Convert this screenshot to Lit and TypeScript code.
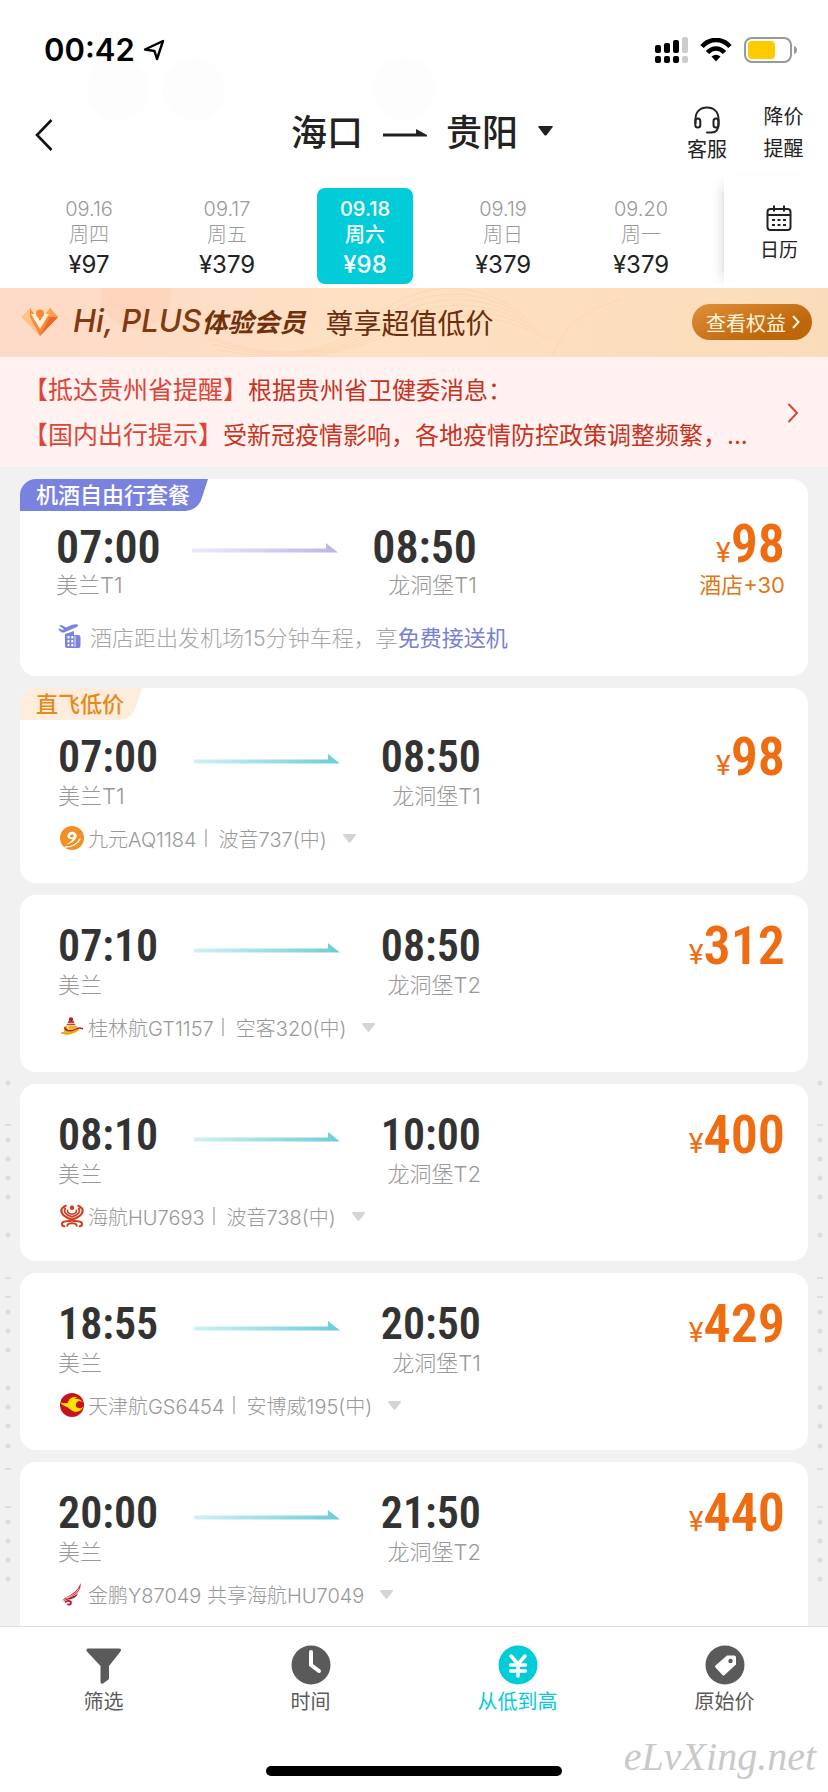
import { LitElement, html, svg, css, nothing } from "lit";
import { customElement, property, state } from "lit/decorators.js";
import { classMap } from "lit/directives/class-map.js";

interface Flight {
  tag?: string;
  kind?: "package" | "direct";
  depart: string;
  from: string;
  arrive: string;
  to: string;
  price: string;
  extra?: string;
  logo: string;
  info: string[];
}

const flights: Flight[] = [
  { tag: "机酒自由行套餐", kind: "package", depart: "07:00", from: "美兰T1", arrive: "08:50", to: "龙洞堡T1", price: "98", extra: "酒店+30", logo: "hotel", info: [] },
  { tag: "直飞低价", kind: "direct", depart: "07:00", from: "美兰T1", arrive: "08:50", to: "龙洞堡T1", price: "98", logo: "jiuyuan", info: ["九元AQ1184", "波音737(中)"] },
  { depart: "07:10", from: "美兰", arrive: "08:50", to: "龙洞堡T2", price: "312", logo: "guilin", info: ["桂林航GT1157", "空客320(中)"] },
  { depart: "08:10", from: "美兰", arrive: "10:00", to: "龙洞堡T2", price: "400", logo: "hainan", info: ["海航HU7693", "波音738(中)"] },
  { depart: "18:55", from: "美兰", arrive: "20:50", to: "龙洞堡T1", price: "429", logo: "tianjin", info: ["天津航GS6454", "安博威195(中)"] },
  { depart: "20:00", from: "美兰", arrive: "21:50", to: "龙洞堡T2", price: "440", logo: "suparna", info: ["金鹏Y87049 共享海航HU7049"] },
];

const days = [
  { date: "09.16", week: "周四", price: "¥97" },
  { date: "09.17", week: "周五", price: "¥379" },
  { date: "09.18", week: "周六", price: "¥98" },
  { date: "09.19", week: "周日", price: "¥379" },
  { date: "09.20", week: "周一", price: "¥379" },
];

const logos: Record<string, unknown> = {
  hotel: svg`
    <path fill="#7b83dc" d="M1 1.500L3.500 1l4.500 2.500L13.500 1c3-1 6-1 6.500 0s-1 2-3 2.800L6 8.500H3.500L0 5l1.800-.4L4 6l2-.8z"/>
    <path fill="#7b83dc" d="M7 10l9-3v4h4q2.500 0 2.500 2.500V22q0 2-2 2H9q-2 0-2-2z"/>
    <path fill="#fff" d="M9.500 12h2v2.500h-2zM13.300 12h2v2.500h-2zM9.500 16h2v2.500h-2zM13.300 16h2v2.500h-2zM9.500 20h2v2.300h-2zM13.300 20h2v2.300h-2z"/>
    <path stroke="#fff" stroke-width=".8" d="M17 12v11"/>`,
  jiuyuan: svg`
    <circle cx="12" cy="12" r="12" fill="#f09026"/>
    <path fill="#fff" fill-rule="evenodd" d="M7.500 9.500C8 6.800 11 5 13.800 6c2.700 1 3.600 3.600 2.200 6.300-1.700 3.200-5.500 5.500-10.500 6.300 4-1.800 6.300-3.600 7.300-5.600-3 .7-5.900-.9-5.300-3.500zM11.500 8.500c-1.300.5-1.900 1.900-1 2.700s2.800.3 3.300-.9c.4-1.200-.9-2.300-2.300-1.800z"/>
    <path fill="none" stroke="#fff" stroke-width="1.400" d="M5 21c7 .3 13-3.500 15.500-8.500"/>`,
  guilin: svg`
    <circle cx="11" cy="4.500" r="2.200" fill="#b21f2d"/>
    <path fill="#c33327" d="M8.500 6h5l3 6H5.500z"/>
    <path stroke="#fff" stroke-width=".8" d="M7 8.400h8M6 10.400h10"/>
    <path fill="#f4b61e" d="M5 11h12l2 4c-4 4-11 5-15.500 2.500z"/>
    <path fill="none" stroke="#fff0a0" stroke-width="1.500" d="M8 11c-1 3 1 5 5 4"/>
    <path fill="none" stroke="#a8232b" stroke-width="1.500" d="M4.500 12c1 5.500 10 4 12.500 1.800 2-1.200 4-.8 6 .2"/>
    <path fill="none" stroke="#e6a31a" stroke-width="1.600" d="M1 18.500c3-2 3 1 7 .5s5-3 9-4"/>`,
  hainan: svg`
    <circle cx="12" cy="3.800" r="2.300" fill="#cc4324"/>
    <g fill="none" stroke="#cc4324">
      <path stroke-width="2.200" d="M6.500 1.500C-1.500 4.500-.5 11.500 12 15.500 24.500 11.500 25.500 4.500 17.500 1.500"/>
      <path stroke-width="1.800" d="M5.500 3.800C3 8 6 11 12 12.800c6-1.800 9-4.800 6.500-9"/>
      <path stroke-width="1.600" d="M7.500 5.500c-.5 3 1.500 4.500 4.500 4.800 3-.3 5-1.800 4.500-4.800"/>
      <path stroke-width="2.200" d="M12 16c-3 2-8 .5-9.500 2.500-1.500 2.500.8 4.500 2.500 3.300M12 16c3 2 8 .5 9.500 2.500 1.500 2.500-.8 4.500-2.500 3.300"/>
      <path stroke-width="2" d="M7 22.500c1-3.500 2.500-3.300 5-3.300s4 -.2 5 3.300"/>
    </g>`,
  tianjin: svg`
    <circle cx="12" cy="12" r="12" fill="#c8131c"/>
    <path fill="#ffe400" d="M0 9.500c3 .5 5.500 1 8 .5C8.500 5.500 13 3 17.500 4.500c-1.500.2-2.500.8-3 1.500 4-.8 7.500 1 8.500 4-1-1.500-3-2.500-5-1.500-2.500 1-3 4.500-1 6s5 .8 6.500-1c-1.500 4-5.500 6-9.500 5-3.500-1-4.500-3.500-8-5C3.500 12.700 1.500 11.500 0 9.500z"/>`,
  suparna: svg`
    <path fill="#cf2031" d="M20.500 1c1 6-3 11-9 13.500-3 1.200-6 2-9.500 4.500C5 15 8 14.500 11 12.500 16 9.500 19 6 20.500 1z"/>
    <path fill="#a9162a" d="M18 11c-1 4-5 6-9 6.500-2.500.3-4 .7-6 2.500 2-3 4-3.500 7-4.500 3.500-1.200 6-2.500 8-4.500z"/>
    <path fill="none" stroke="#fff" stroke-width=".7" d="M19 6.500C16.500 11.500 12 13.500 6 16"/>
    <path fill="none" stroke="#b81a2c" stroke-width="1.800" d="M5 20.500c2-2.500 6-2 6 .5 0 2-3 2.300-3.200.6"/>`,
};

const shared = css`
  * { box-sizing: border-box; margin: 0; }
  button { font: inherit; color: inherit; background: none; border: 0; padding: 0; }
  a { color: inherit; text-decoration: none; }
  svg { display: block; flex: none; }
`;

@customElement("flight-card")
class FlightCard extends LitElement {
  @property({ attribute: false }) flight!: Flight;

  static styles = [
    shared,
    css`
      :host { display: block; flex: none; }
      .card { background: #fff; border-radius: 16px; overflow: hidden; padding: 27px 23px 32px 38px; }
      .tagged { padding-top: 0; }
      .package { padding-left: 36px; padding-bottom: 27px; }
      .tag {
        display: block; position: relative; isolation: isolate; width: max-content; height: 32px;
        margin: 0 0 13px -38px; padding: 0 18px 0 16px;
        font-size: 22px; line-height: 32px; font-weight: 500; color: #e38a1c;
      }
      .tag::before {
        content: ""; position: absolute; inset: 0 0 0 -20px; z-index: -1; background: #feecdc;
        transform: skewX(-18deg); transform-origin: top; border-bottom-right-radius: 12px;
      }
      .package .tag { color: #fff; margin-left: -36px; }
      .package .tag::before { background: #7a82df; }
      .route { display: flex; align-items: flex-start; }
      .stop { width: 136px; white-space: nowrap; }
      .arrive { width: 141px; text-align: right; }
      .package .arrive { width: 139px; }
      .time { font: 600 44px/48px "Roboto Condensed", Roboto, sans-serif; color: #333; }
      .package .time { font-size: 46px; line-height: 46px; }
      .port { font-size: 22px; line-height: 30px; font-weight: 300; color: #999; }
      .arrow { margin-top: 20px; width: 146px; }
      .package .arrow { margin-top: 18px; }
      .cost { margin-left: auto; text-align: right; color: #ee6c12; }
      .price { display: flex; align-items: baseline; justify-content: flex-end; font: 600 54px/48px "Roboto Condensed", Roboto, sans-serif; }
      .package .price { height: 40px; line-height: 40px; }
      .unit { font: 400 28px/30px Roboto, sans-serif; }
      .extra { padding-top: 6px; font-size: 22px; line-height: 30px; color: #e07818; }
      .info { display: flex; align-items: center; margin-top: 14px; height: 26px; padding-left: 2px; font-size: 20px; font-weight: 300; color: #999; white-space: nowrap; }
      .package .info { margin-top: 23px; font-size: 22px; color: #a6a6a6; }
      .text { margin-left: 4px; }
      .package .text { margin-left: 8px; }
      .bar { width: 2px; height: 18px; background: #c4c4c4; margin: 0 12px 0 8px; }
      .more { margin-left: 16px; padding: 4px 0; }
      .perk { color: #7880d4; font-weight: 400; }
    `,
  ];

  render() {
    const f = this.flight;
    const pack = f.kind === "package";
    return html`
      <article class=${classMap({ card: true, tagged: !!f.tag, package: pack })}>
        ${f.tag ? html`<span class="tag">${f.tag}</span>` : nothing}
        <div class="route">
          <div class="stop">
            <div class="time">${f.depart}</div>
            <div class="port">${f.from}</div>
          </div>
          <svg class="arrow" width="146" height="11" viewBox="0 0 146 11" aria-hidden="true">
            <defs>
              <linearGradient id="g">
                <stop offset="0" stop-color=${pack ? "#eeeafb" : "#cff1f2"} />
                <stop offset="1" stop-color=${pack ? "#bcb3e8" : "#6ccdd8"} />
              </linearGradient>
            </defs>
            <path fill="url(#g)" d="M0 6.500H134V1L146 10.500H0z" />
          </svg>
          <div class="stop arrive">
            <div class="time">${f.arrive}</div>
            <div class="port">${f.to}</div>
          </div>
          <div class="cost">
            <div class="price"><span class="unit">¥</span>${f.price}</div>
            ${f.extra ? html`<div class="extra">${f.extra}</div>` : nothing}
          </div>
        </div>
        <div class="info">
          <svg width="24" height="24" viewBox="0 0 24 24" aria-hidden="true">${logos[f.logo]}</svg>
          ${pack
            ? html`<span class="text">酒店距出发机场15分钟车程，享<a class="perk" href="#pickup">免费接送机</a></span>`
            : html`
                <span class="text">${f.info[0]}</span>
                ${f.info[1] ? html`<i class="bar"></i><span>${f.info[1]}</span>` : nothing}
                <button class="more" aria-label="展开">
                  <svg width="13" height="9" viewBox="0 0 13 9"><path fill="#d5d5d5" d="M1 0h11q1.500 0 .7 1.500L7.500 8.300q-1 1-2 0L.3 1.500Q-.5 0 1 0z" /></svg>
                </button>
              `}
        </div>
      </article>
    `;
  }
}

@customElement("app-root")
class AppRoot extends LitElement {
  @state() private day = 2;
  @state() private sort = 2;

  static styles = [
    shared,
    css`
      :host {
        display: flex; flex-direction: column; height: 100vh; overflow: hidden; position: relative; background: #fff;
        font-family: Inter, "Noto Sans CJK SC", sans-serif; color: #222;
      }
      .top {
        background:
          radial-gradient(circle 32px at 118px 89px, #fdfdfd 31px, transparent 32px),
          radial-gradient(circle 32px at 194px 89px, #fdfdfd 31px, transparent 32px),
          radial-gradient(circle 32px at 404px 89px, #fdfdfd 31px, transparent 32px), #fff;
      }
      .status { display: flex; align-items: center; height: 90px; padding: 10px 31px 0 44px; color: #000; }
      .clock { font-size: 31px; line-height: 40px; font-weight: 600; }
      .locate { margin-left: 8px; }
      .signals { margin-left: auto; display: flex; align-items: center; gap: 12px; }
      .header { display: grid; grid-template-columns: 168px 1fr 152px; align-items: center; height: 86px; }
      .back { justify-self: start; padding: 10px 34px 6px; }
      .cities { justify-self: center; display: flex; align-items: center; font-size: 36px; line-height: 48px; font-weight: 500; white-space: nowrap; }
      .to { margin: 0 18px 0 19px; }
      .drop { margin-left: 20px; margin-bottom: 4px; }
      .actions { display: flex; align-items: center; justify-content: flex-end; gap: 36px; padding-right: 24px; font-size: 20px; line-height: 24px; white-space: nowrap; }
      .service { display: flex; flex-direction: column; align-items: center; gap: 4px; padding-top: 2px; }
      .alert { width: 41px; line-height: 32px; white-space: normal; text-align: center; }
      .dates { display: flex; height: 112px; }
      .days { flex: 1; display: grid; grid-template-columns: repeat(5, 1fr); padding: 12px 14px 4px 20px; }
      .day { justify-self: center; width: 96px; height: 96px; border-radius: 8px; font-size: 20px; line-height: 26px; font-weight: 300; color: #999; padding: 8px 0 2px; display: flex; flex-direction: column; align-items: center; }
      .fare { font-size: 24px; line-height: 34px; color: #222; font-weight: 400; }
      .on, .on .fare { color: #fff; font-weight: 500; }
      .on { background: #02ccd8; }
      .calendar { width: 104px; display: flex; flex-direction: column; align-items: center; justify-content: center; gap: 8px; padding: 4px 0 0 6px; font-size: 19px; line-height: 24px; box-shadow: -10px 0 12px -10px rgba(0, 0, 0, 0.2); }
      .plus { display: flex; align-items: center; height: 69px; padding: 0 16px 0 21px; position: relative; overflow: hidden; isolation: isolate; white-space: nowrap; background: linear-gradient(90deg, #fedac8, #fee1c3 45%, #fbdcba); border-bottom: 1px solid #f8dccf; }
      .waves { position: absolute; left: 0; top: 0; z-index: -1; }
      .member { margin-left: 14px; font-size: 26px; font-weight: 700; font-style: italic; color: #70300b; line-height: 40px; }
      .latin { font-size: 31px; font-weight: 500; color: #803a0f; }
      .slogan { margin-left: 20px; font-size: 28px; color: #6b2d0c; }
      .rights { margin-left: auto; display: flex; align-items: center; gap: 6px; height: 36px; padding: 0 12px 0 14px; border-radius: 18px; font-size: 20px; color: #fff3dc; background: linear-gradient(160deg, #e0903a, #bd660a 75%); }
      .notice { display: flex; align-items: center; height: 110px; padding: 2px 29px 0 23px; background: #fff2f0; color: #c8321f; font-size: 24px; }
      .lines { flex: 1; min-width: 0; line-height: 44px; }
      .line { white-space: nowrap; overflow: hidden; text-overflow: ellipsis; }
      .label { color: #dc4638; font-size: 25px; }
      .list { flex: 1; min-height: 0; overflow: hidden; background: #f1f1f1; position: relative; display: flex; flex-direction: column; gap: 12px; padding: 12px 20px 0; }
      .marks { position: absolute; top: 0; left: 3px; }
      .right { left: auto; right: 3px; }
      .tabs { flex: none; height: 166px; border-top: 1px solid #ddd; background: #fff; padding-top: 18px; position: relative; }
      .row { display: grid; grid-template-columns: repeat(4, 1fr); }
      .tab { display: flex; flex-direction: column; align-items: center; gap: 4px; font-size: 20px; line-height: 26px; color: #5a5a5a; }
      .active { color: #02ccd8; }
      .home { position: absolute; left: 50%; bottom: 16px; width: 296px; height: 10px; margin-left: -148px; border-radius: 5px; background: #000; }
      .mark { position: absolute; right: 12px; bottom: 12px; font: italic 40px/46px "Liberation Serif", serif; color: #c9c9c9; }
    `,
  ];

  private tabIcon(i: number) {
    const icons = [
      svg`<path fill="currentColor" d="M4 3.500h31q3 0 1.500 3L25 21v12q0 1.500-1.200 2L19 38.500q-2.500 1-2.500-1.500V21L3 6.500q-1.500-3 1-3z"/>`,
      svg`<circle cx="20" cy="20" r="19.500" fill="currentColor"/><path fill="none" stroke="#fff" stroke-width="4" stroke-linecap="round" stroke-linejoin="round" d="M20 7v13l8 6"/>`,
      svg`<circle cx="20" cy="20" r="19.500" fill="currentColor"/><path fill="none" stroke="#fff" stroke-width="3.500" stroke-linecap="round" d="M13 11l7 8 7-8M12.500 20h15M12.500 26h15M20 19.500V31"/>`,
      svg`<circle cx="20" cy="20" r="19.500" fill="currentColor"/><path fill="#fff" d="M22 10.500h7q2 0 2 2v7L19.500 30q-1 1-2 0l-7-7.500q-1-1 0-2z"/><circle cx="25.500" cy="16" r="2.200" fill="currentColor"/>`,
    ];
    return html`<svg width="40" height="40" viewBox="0 0 40 40" aria-hidden="true">${icons[i]}</svg>`;
  }

  private gutter(right: boolean) {
    const dots = [616, 673, 692, 711, 730, 768, 845, 864, 883, 921, 940, 959, 979, 1055, 1074, 1093, 1112];
    const dashes = [658, 811, 830, 1002, 1040];
    return html`<svg class=${classMap({ marks: true, right })} width="10" height="1160" aria-hidden="true">
      ${dots.map((y) => svg`<circle cx="5" cy=${y} r="2.500" fill="#dcdcdc"/>`)}
      ${dashes.map((y) => svg`<path d="M2 ${y}h6" stroke="#d8d8d8" stroke-width="1.500"/>`)}
    </svg>`;
  }

  render() {
    return html`
      <div class="top">
        <div class="status">
          <span class="clock">00:42</span>
          <svg class="locate" width="22" height="22" viewBox="0 0 22 22" aria-hidden="true"><path fill="none" stroke="#000" stroke-width="2.400" stroke-linejoin="round" d="M2 10.500L20 2l-6 18-2.500-8z"/></svg>
          <div class="signals">
            <svg width="33" height="26" viewBox="0 0 33 26" aria-hidden="true">
              <rect x="0" y="8" width="6" height="8" rx="2"/><rect x="9" y="6" width="6" height="10" rx="2"/><rect x="18" y="3" width="6" height="13" rx="2"/><rect x="27" width="6" height="16" rx="2" fill="#ccc"/>
              <rect x="0" y="19" width="6" height="7" rx="2"/><rect x="9" y="19" width="6" height="7" rx="2"/><rect x="18" y="19" width="6" height="7" rx="2"/><rect x="27" y="19" width="6" height="7" rx="2" fill="#ccc"/>
            </svg>
            <svg width="32" height="24" viewBox="0 0 32 24" aria-hidden="true">
              <path fill="none" stroke="#000" stroke-width="4.600" d="M2 8.500C10-.2 22-.2 30 8.500M7.500 14.500c5-5.300 12-5.300 17 0"/>
              <path d="M11.500 18.500q4.500-3.500 9 0L16 23.500z"/>
            </svg>
            <svg width="53" height="26" viewBox="0 0 53 26" aria-hidden="true">
              <rect x="1" y="1" width="46" height="24" rx="7" fill="none" stroke="#999" stroke-width="2"/>
              <rect x="4" y="4" width="27" height="18" rx="4" fill="#fdcb02"/><path fill="#999" d="M50 9q3 1 3 4t-3 4z"/>
            </svg>
          </div>
        </div>
        <header class="header">
          <button class="back" aria-label="返回"><svg width="20" height="34" viewBox="0 0 20 34"><path fill="none" stroke="#111" stroke-width="2.600" d="M17.500 2L3 17l14.500 15"/></svg></button>
          <button class="cities">
            <span>海口</span>
            <svg class="to" width="46" height="10" viewBox="0 0 46 10" aria-hidden="true"><path fill="#222" d="M1 5.500H34V1L45 7v1.500H1z"/></svg>
            <span>贵阳</span>
            <svg class="drop" width="15" height="10" viewBox="0 0 15 10" aria-hidden="true"><path fill="#222" d="M1 0h13q1.300 0 .5 1.300L8.700 9q-1.200 1-2.400 0L.5 1.300Q-.3 0 1 0z"/></svg>
          </button>
          <div class="actions">
            <button class="service">
              <svg width="28" height="28" viewBox="0 0 28 28" aria-hidden="true">
                <g fill="none" stroke="#222" stroke-width="2" stroke-linecap="round"><path d="M2.500 17V13C2.500 6 7 1.500 14 1.500S25.500 6 25.500 13v5c0 5-2 8.500-7 8.500h-4.500"/><rect x="2.300" y="12.500" width="5" height="9" rx="2.500"/><rect x="20.500" y="12.500" width="5" height="9" rx="2.500"/></g>
              </svg>
              客服
            </button>
            <button class="alert">降价提醒</button>
          </div>
        </header>
        <nav class="dates">
          <div class="days">
            ${days.map((d, i) => html`
              <button class=${classMap({ day: true, on: i === this.day })} @click=${() => (this.day = i)}>
                <span>${d.date}</span><span>${d.week}</span><span class="fare">${d.price}</span>
              </button>`)}
          </div>
          <button class="calendar">
            <svg width="26" height="26" viewBox="0 0 26 26" aria-hidden="true">
              <g fill="none" stroke="#222" stroke-width="2"><rect x="1.500" y="4" width="23" height="21" rx="3"/><path d="M1.500 10h23M8 0.500v6M18 0.500v6"/><path stroke-width="2.200" stroke-dasharray="3 2.500" d="M6 15h15M6 20h15"/></g>
            </svg>
            日历
          </button>
        </nav>
      </div>
      <section class="plus">
        <svg class="waves" width="828" height="69" aria-hidden="true">
          <circle cx="136" cy="6" r="35" fill="#fcc8a8" opacity=".3"/>
          <g fill="none" stroke="#f5c48e" opacity=".28">
            ${[0, 6, 12, 18, 24, 30].map((d) => svg`<path d="M${200 + d} ${44 + d}Q${300 + d} ${90 - d / 2} ${370 + d} ${32 + d / 3}T${520 + d} ${22 + d}"/>`)}
            <path d="M552 69Q566 26 620 12"/>
          </g>
        </svg>
        <svg width="38" height="32" viewBox="0 0 38 32" aria-hidden="true">
          <path fill="#f58a3c" d="M9 2h20l8 9-18 19L1 11z"/><path fill="#ffc48a" d="M9 2L1 11l18 19L9 11z"/><path fill="#ffdcae" d="M9 2h20l-4 6H13z"/><path fill="#f9a352" d="M29 2l8 9h-8l-4-3z"/><path fill="#e9682a" d="M29 11h8L19 30z"/>
          <path fill="#fff0d8" d="M10 8h5l4 7 4-7h5l-9 15z"/><circle cx="19" cy="7.500" r="4" fill="#f5893f"/>
        </svg>
        <span class="member"><span class="latin">Hi, PLUS</span>体验会员</span>
        <span class="slogan">尊享超值低价</span>
        <a class="rights" href="#rights">查看权益<svg width="8" height="14" viewBox="0 0 8 14"><path fill="none" stroke="#fff3dc" stroke-width="2" d="M1 1l5.500 6L1 13"/></svg></a>
      </section>
      <a class="notice" href="#notice">
        <div class="lines">
          <p class="line"><span class="label">【抵达贵州省提醒】</span>根据贵州省卫健委消息：</p>
          <p class="line"><span class="label">【国内出行提示】</span>受新冠疫情影响，各地疫情防控政策调整频繁，...</p>
        </div>
        <svg width="12" height="20" viewBox="0 0 12 20" aria-hidden="true"><path fill="none" stroke="#dc4638" stroke-width="2" d="M1.500 1L10 10l-8.500 9"/></svg>
      </a>
      <main class="list">
        ${this.gutter(false)}${this.gutter(true)}
        ${flights.map((f) => html`<flight-card .flight=${f}></flight-card>`)}
      </main>
      <footer class="tabs">
        <nav class="row">
          ${["筛选", "时间", "从低到高", "原始价"].map((t, i) => html`
            <button class=${classMap({ tab: true, active: i === this.sort })} @click=${() => (this.sort = i)}>${this.tabIcon(i)}${t}</button>`)}
        </nav>
        <div class="home"></div>
        <span class="mark">eLvXing.net</span>
      </footer>
    `;
  }
}
